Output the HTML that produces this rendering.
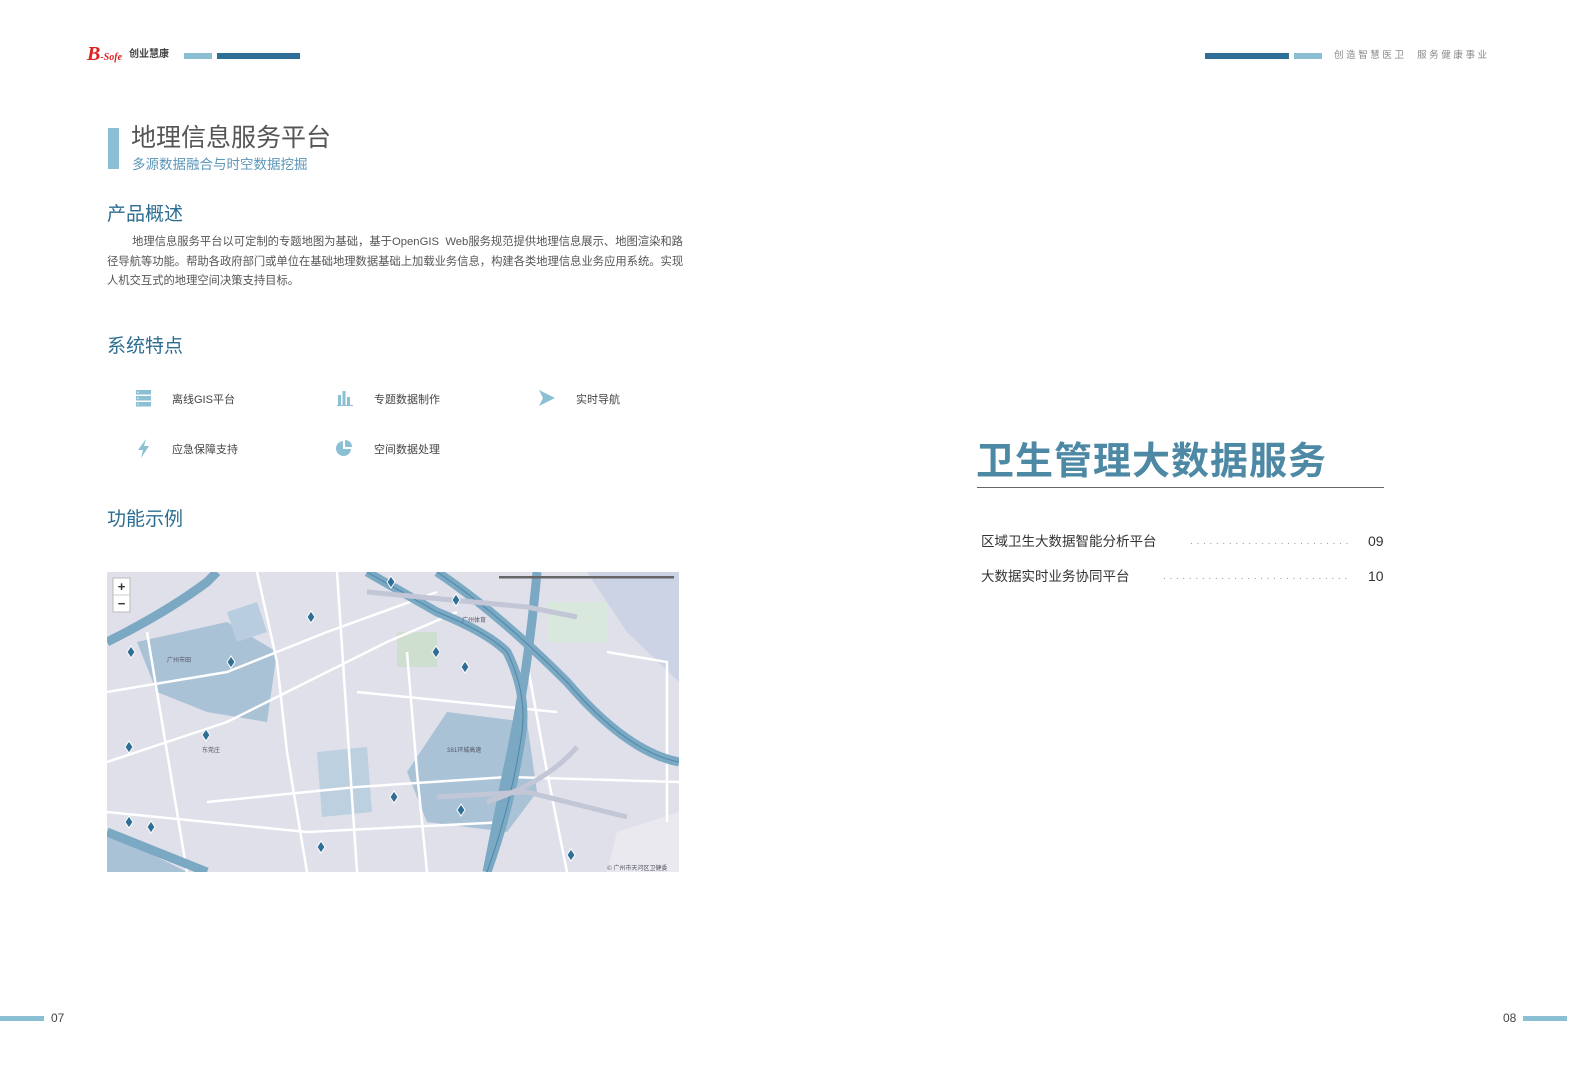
<!DOCTYPE html>
<html><head><meta charset="utf-8"><style>
*{margin:0;padding:0;box-sizing:border-box}
body{width:1587px;height:1084px;background:#fff;position:relative;overflow:hidden;font-family:"Liberation Sans","Noto Sans CJK SC",sans-serif;}
.a{position:absolute;white-space:nowrap}
.h2{font-size:19px;color:#2b6d90;line-height:22px}
.p{position:absolute;left:107px;top:233px;width:572px;font-size:11.3px;line-height:19.5px;color:#555;}
.p div{text-align:justify;text-align-last:justify;white-space:nowrap}
.p div.l{text-align-last:left}
.ft{font-size:11px;color:#444}
</style></head><body>
<!-- header left -->
<div class="a" style="left:87px;top:44px;font-family:'Liberation Serif',serif;font-style:italic;color:#d22;font-size:20px;font-weight:bold;line-height:20px">B<span style="font-size:10px">-Sofe</span></div>
<div class="a" style="left:129px;top:49px;font-size:10px;font-weight:bold;color:#444;line-height:12px">创业慧康</div>
<div class="a" style="left:184px;top:53px;width:28px;height:6px;background:#8bbfd4"></div>
<div class="a" style="left:217px;top:53px;width:83px;height:6px;background:#2f6f95"></div>
<!-- header right -->
<div class="a" style="left:1205px;top:53px;width:84px;height:6px;background:#2f6f95"></div>
<div class="a" style="left:1294px;top:53px;width:28px;height:6px;background:#8bbfd4"></div>
<div class="a" style="left:1334px;top:50px;font-size:9.5px;color:#888;letter-spacing:2.6px;line-height:12px">创造智慧医卫&nbsp;&nbsp;服务健康事业</div>

<!-- title -->
<div class="a" style="left:108px;top:128px;width:11px;height:41px;background:#8bbfd4"></div>
<div class="a" style="left:131px;top:123px;font-size:25px;color:#555;line-height:30px">地理信息服务平台</div>
<div class="a" style="left:132px;top:156px;font-size:13.5px;color:#5b95b8;line-height:17px">多源数据融合与时空数据挖掘</div>

<div class="a h2" style="left:107px;top:204px">产品概述</div>
<div class="p">
<div>&nbsp;&nbsp;&nbsp;&nbsp;&nbsp;&nbsp;&nbsp;&nbsp;地理信息服务平台以可定制的专题地图为基础，基于OpenGIS&nbsp;&nbsp;Web服务规范提供地理信息展示、地图渲染和路</div>
<div>径导航等功能。帮助各政府部门或单位在基础地理数据基础上加载业务信息，构建各类地理信息业务应用系统。实现</div>
<div class="l">人机交互式的地理空间决策支持目标。</div>
</div>

<div class="a h2" style="left:107px;top:336px">系统特点</div>
<!-- features -->
<svg class="a" style="left:136px;top:390px" width="16" height="17"><rect x="0" y="0" width="15" height="4.5" fill="#8bbfd4"/><rect x="0" y="6" width="15" height="4.5" fill="#8bbfd4"/><rect x="0" y="12" width="15" height="4.5" fill="#8bbfd4"/><circle cx="2" cy="2.2" r=".7" fill="#fff"/><circle cx="2" cy="8.2" r=".7" fill="#fff"/><circle cx="2" cy="14.2" r=".7" fill="#fff"/></svg>
<div class="a ft" style="left:172px;top:391px">离线GIS平台</div>
<svg class="a" style="left:337px;top:390px" width="16" height="16"><rect x="0" y="15" width="16" height="1" fill="#8bbfd4"/><rect x="1" y="5" width="3" height="10" fill="#8bbfd4"/><rect x="5.5" y="1" width="3" height="14" fill="#8bbfd4"/><rect x="10" y="7" width="3" height="8" fill="#8bbfd4"/></svg>
<div class="a ft" style="left:374px;top:391px">专题数据制作</div>
<svg class="a" style="left:539px;top:390px" width="17" height="17"><path d="M0 0 L16 8 L0 16 L4 8 Z" fill="#8bbfd4"/></svg>
<div class="a ft" style="left:576px;top:391px">实时导航</div>
<svg class="a" style="left:137px;top:439px" width="14" height="19"><path d="M9 0 L1 11 L6 11 L4 19 L12 7 L7 7 Z" fill="#8bbfd4"/></svg>
<div class="a ft" style="left:172px;top:441px">应急保障支持</div>
<svg class="a" style="left:336px;top:440px" width="18" height="17"><path d="M7 1 A7.5 7.5 0 1 0 15 9 L7 9 Z" fill="#8bbfd4"/><path d="M9 0 L9 7 L16 7 A7 7 0 0 0 9 0 Z" fill="#8bbfd4"/></svg>
<div class="a ft" style="left:374px;top:441px">空间数据处理</div>

<div class="a h2" style="left:107px;top:509px">功能示例</div>

<!-- map -->
<svg class="a" style="left:107px;top:572px" width="572" height="300" viewBox="0 0 572 300">
<rect width="572" height="300" fill="#dfe0ea"/>
<path d="M30 70 L120 50 L170 80 L160 150 L100 140 L50 120 Z" fill="#a9c2d6"/>
<path d="M120 40 L150 30 L160 60 L130 70 Z" fill="#b9cde0"/>
<path d="M340 140 L420 150 L430 220 L400 260 L320 250 L300 200 Z" fill="#a9c2d6"/>
<path d="M210 180 L260 175 L265 240 L215 245 Z" fill="#bcd0e0"/>
<path d="M290 60 L330 60 L330 95 L290 95 Z" fill="#cfdfcf"/>
<path d="M440 30 L500 30 L500 70 L440 70 Z" fill="#d9e8dc"/>
<path d="M480 0 L572 0 L572 110 L520 60 Z" fill="#ccd3e4"/>
<path d="M510 260 L572 240 L572 300 L500 300 Z" fill="#e9e9ef"/>
<path d="M0 300 L0 260 L60 290 L80 300 Z" fill="#a9c2d6"/>
<g fill="none" stroke="#fff" stroke-width="2.5">
<path d="M0 120 L120 100 L220 60 L330 20"/><path d="M0 190 L120 150 L200 110 L280 70 L350 40"/>
<path d="M150 0 L170 90 L180 180 L200 300"/><path d="M250 120 L350 130 L450 140"/>
<path d="M100 230 L250 215 L400 205 L572 210"/><path d="M300 80 L310 200 L320 300"/>
<path d="M420 90 L440 200 L460 300"/><path d="M40 60 L80 300"/><path d="M230 0 L250 300"/>
<path d="M500 80 L560 90 L560 250"/><path d="M0 240 L200 260 L400 250"/>
</g>
<g fill="none" stroke="#7ba8c2" stroke-width="9">
<path d="M0 70 Q60 40 100 10 L110 0"/>
<path d="M330 0 Q390 40 460 110 Q520 180 572 190"/>
<path d="M260 0 L330 40 Q380 60 400 80 Q420 120 415 160 Q405 230 380 300"/>
<path d="M430 0 Q420 110 400 200 L380 300"/>
<path d="M0 260 L100 300"/>
</g>
<g fill="none" stroke="#4d87a8" stroke-width="1"><path d="M330 0 Q390 40 460 110 Q520 180 572 190"/><path d="M260 0 L330 40 Q380 60 400 80 Q420 120 415 160 Q405 230 380 300"/></g>
<g fill="none" stroke="#c2c6d6" stroke-width="5"><path d="M260 20 L420 35 L470 45"/><path d="M330 225 L420 220 L520 245"/><path d="M380 230 Q440 210 470 175"/></g>
<rect x="392" y="4" width="175" height="2.5" fill="#666"/>
<rect x="6" y="6" width="17" height="34" fill="#fff" stroke="#bbb"/><line x1="6" y1="23" x2="23" y2="23" stroke="#ccc"/>
<text x="14.5" y="19" font-size="13" text-anchor="middle" fill="#333" font-weight="bold">+</text><text x="14.5" y="36" font-size="13" text-anchor="middle" fill="#333" font-weight="bold">−</text>
<g fill="#2f6f95" stroke="#fff" stroke-width="1">
<path d="M20 80 l4 -6 l4 6 l-4 6 z"/><path d="M120 90 l4 -6 l4 6 l-4 6 z"/><path d="M200 45 l4 -6 l4 6 l-4 6 z"/><path d="M325 80 l4 -6 l4 6 l-4 6 z"/><path d="M354 95 l4 -6 l4 6 l-4 6 z"/><path d="M95 163 l4 -6 l4 6 l-4 6 z"/><path d="M18 175 l4 -6 l4 6 l-4 6 z"/><path d="M283 225 l4 -6 l4 6 l-4 6 z"/><path d="M350 238 l4 -6 l4 6 l-4 6 z"/><path d="M40 255 l4 -6 l4 6 l-4 6 z"/><path d="M210 275 l4 -6 l4 6 l-4 6 z"/><path d="M460 283 l4 -6 l4 6 l-4 6 z"/><path d="M345 28 l4 -6 l4 6 l-4 6 z"/><path d="M280 10 l4 -6 l4 6 l-4 6 z"/><path d="M18 250 l4 -6 l4 6 l-4 6 z"/>
</g>
<g font-size="6" fill="#556" font-family="Noto Sans CJK SC,sans-serif"><text x="60" y="90">广州市田</text><text x="355" y="50">广州体育</text><text x="340" y="180">S81环城高速</text><text x="95" y="180">东莞庄</text><text x="500" y="298">© 广州市天河区卫健委</text></g>
</svg>

<!-- right page -->
<div class="a" style="left:976px;top:437px;font-size:38px;font-weight:bold;color:#4d88a5;letter-spacing:1px;line-height:50px">卫生管理大数据服务</div>
<div class="a" style="left:977px;top:487px;width:407px;height:1px;background:#666"></div>
<div class="a" style="left:981px;top:533px;font-size:13.5px;color:#333;line-height:17px">区域卫生大数据智能分析平台</div>
<div class="a" style="left:1190px;top:533px;font-size:10px;color:#999;letter-spacing:3.7px;line-height:17px">.........................</div>
<div class="a" style="left:1368px;top:533px;font-size:14px;color:#333;line-height:17px">09</div>
<div class="a" style="left:981px;top:568px;font-size:13.5px;color:#333;line-height:17px">大数据实时业务协同平台</div>
<div class="a" style="left:1163px;top:568px;font-size:10px;color:#999;letter-spacing:3.7px;line-height:17px">.............................</div>
<div class="a" style="left:1368px;top:568px;font-size:14px;color:#333;line-height:17px">10</div>

<!-- footer -->
<div class="a" style="left:0;top:1016px;width:44px;height:5px;background:#8bbfd4"></div>
<div class="a" style="left:51px;top:1011px;font-size:12px;color:#444">07</div>
<div class="a" style="left:1503px;top:1011px;font-size:12px;color:#444">08</div>
<div class="a" style="left:1523px;top:1016px;width:44px;height:5px;background:#8bbfd4"></div>
</body></html>
